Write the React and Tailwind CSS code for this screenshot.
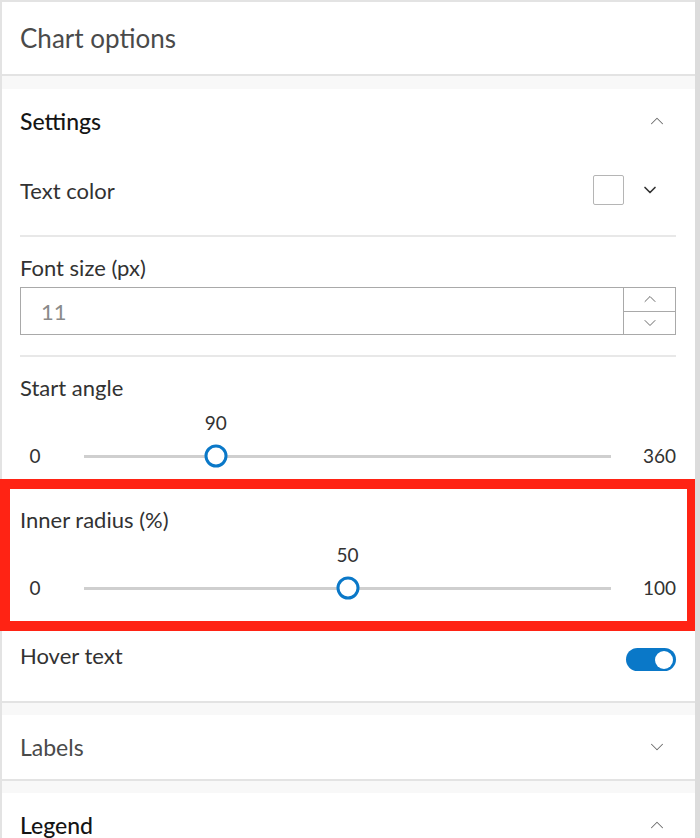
import { ChevronDown, ChevronUp } from "lucide-react";

const font = { fontFamily: "Lato, 'Noto Sans', sans-serif" };

function SectionHeading({ title, open, dim }) {
  return (
    <div className="flex h-[64px] items-center justify-between pl-[18px] pr-[27px]">
      <span className={dim ? "text-[23px] text-[#4a4a4a]" : "text-[23px] font-medium text-[#151515]"}>{title}</span>
      {open ? (
        <ChevronUp size={22} strokeWidth={1.1} className="text-[#6a6a6a]" />
      ) : (
        <ChevronDown size={22} strokeWidth={1.1} className="text-[#6a6a6a]" />
      )}
    </div>
  );
}

function Slider({ min, max, value }) {
  const pct = ((value - min) / (max - min)) * 100;
  return (
    <div className="flex h-[24px] items-center">
      <div className="w-[30px] text-center text-[19px] leading-[24px] text-[#323232]">{min}</div>
      <div className="relative ml-[34px] h-[3px] flex-1 bg-[#cfcfcf]">
        <div
          className="absolute top-1/2 h-[23px] w-[23px] -translate-x-1/2 -translate-y-1/2 rounded-full border-[3px] border-[#0a78c8] bg-white"
          style={{ left: `${pct}%` }}
        />
        <div
          className="absolute top-[-44px] -translate-x-1/2 text-[19px] leading-[24px] text-[#323232]"
          style={{ left: `${pct}%` }}
        >
          {value}
        </div>
      </div>
      <div className="ml-[20px] w-[45px] text-right text-[19px] leading-[24px] text-[#323232]">{max}</div>
    </div>
  );
}

export default function App() {
  return (
    <div className="flex h-[838px] w-[700px] overflow-hidden bg-white" style={font}>
      <div className="w-[695px] shrink-0 border-l-2 border-t-2 border-[#e3e3e3]">
        <div className="flex h-[74px] items-center border-b-2 border-[#e3e3e3] px-[18px]">
          <span className="text-[26px] text-[#4a4a4a]">Chart options</span>
        </div>
        <div className="h-[13px] bg-[#f8f8f8]" />

        <div className="border-b-2 border-[#e3e3e3]">
          <SectionHeading title="Settings" open />

          <div className="pl-[18px] pr-[19px]">
            <div className="flex h-[74px] items-center justify-between">
              <span className="text-[22px] text-[#323232]">Text color</span>
              <div className="flex items-center gap-[16px] pr-[16px]">
                <div className="h-[30px] w-[31px] rounded-[2px] border-[1.5px] border-[#b5b5b5] bg-white" />
                <ChevronDown size={20} strokeWidth={2} className="text-[#323232]" />
              </div>
            </div>
            <div className="mt-2 h-[2px] bg-[#e8e8e8]" />

            <div className="pt-[18px] text-[22px] leading-[26px] text-[#323232]">Font size (px)</div>
            <div className="mt-[6px] flex h-[48px] border-[1.5px] border-[#a9a9a9]">
              <div className="flex flex-1 items-center pl-5 text-[22px] text-[#8a8a8a]">11</div>
              <div className="flex w-[52px] flex-col border-l-[1.5px] border-[#a9a9a9]">
                <div className="flex flex-1 items-center justify-center border-b-[1.5px] border-[#a9a9a9]">
                  <ChevronUp size={20} strokeWidth={1.2} className="text-[#6a6a6a]" />
                </div>
                <div className="flex flex-1 items-center justify-center">
                  <ChevronDown size={20} strokeWidth={1.2} className="text-[#6a6a6a]" />
                </div>
              </div>
            </div>
            <div className="mt-[20px] h-[2px] bg-[#e8e8e8]" />

            <div className="pt-[18px] text-[22px] leading-[26px] text-[#323232]">Start angle</div>
            <div className="pb-[11px] pt-[43px]">
              <Slider min={0} max={360} value={90} />
            </div>
          </div>

          <div className="-ml-[2px] -mr-[2px] border-[10px] border-[#ff2314] pb-[21px] pl-[10px] pr-[11px] pt-[18px]">
            <div className="text-[22px] leading-[26px] text-[#323232]">Inner radius (%)</div>
            <div className="pt-[43px]">
              <Slider min={0} max={100} value={50} />
            </div>
          </div>

          <div className="flex h-[70px] items-start justify-between pl-[18px] pr-[19px] pt-[12px]">
            <span className="text-[22px] leading-[26px] text-[#323232]">Hover text</span>
            <div className="mt-[5px] flex h-[23px] w-[50px] items-center justify-end rounded-full bg-[#0a78c8] px-[3px]">
              <div className="h-[18px] w-[18px] rounded-full bg-white" />
            </div>
          </div>
        </div>

        <div className="h-[12px] bg-[#f8f8f8]" />
        <div className="border-b-2 border-[#e3e3e3]">
          <SectionHeading title="Labels" dim />
        </div>
        <div className="h-[12px] bg-[#f8f8f8]" />
        <div className="border-b-2 border-[#e3e3e3]">
          <SectionHeading title="Legend" open />
        </div>
      </div>
      <div className="h-full w-[5px] shrink-0 bg-[#dcdcdc]" />
    </div>
  );
}
